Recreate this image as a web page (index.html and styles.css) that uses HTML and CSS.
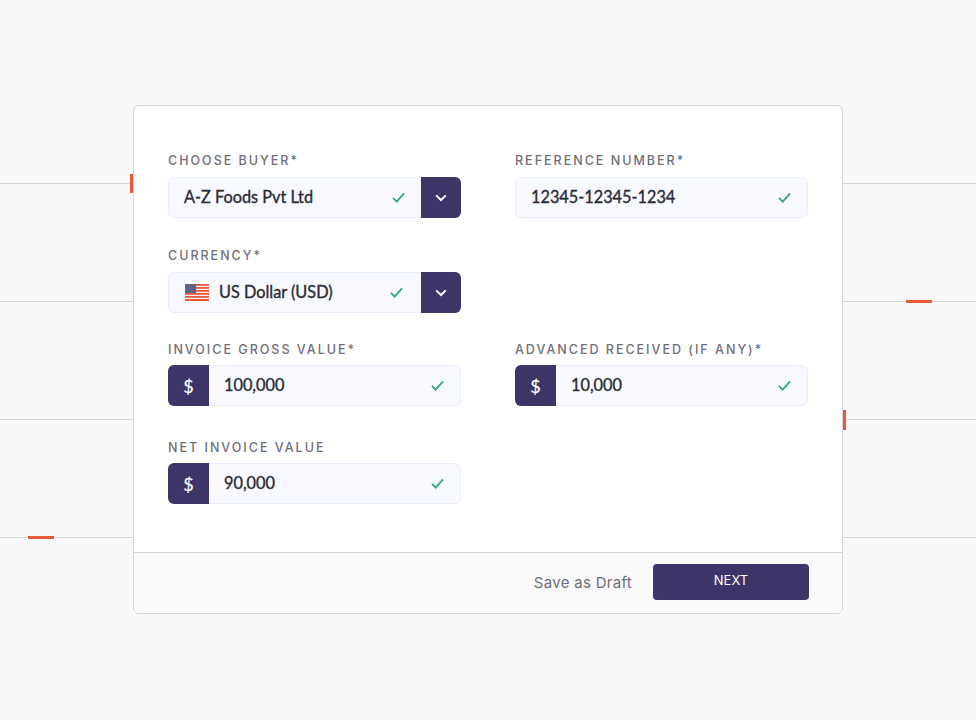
FILE: index.html
```html
<!DOCTYPE html>
<html lang="en">
<head>
    <meta charset="UTF-8">
    <meta name="viewport" content="width=device-width, initial-scale=1.0">
    <title>Invoice details</title>
    <link rel="stylesheet" href="styles.css">
</head>
<body>
<!-- background lines and ticks, behind the card -->
<div class="line line-1"></div>
<div class="line line-2"></div>
<div class="line line-3"></div>
<div class="line line-4"></div>
<div class="tick tick-1"></div>
<div class="tick tick-2"></div>
<div class="tick tick-3"></div>
<div class="tick tick-4"></div>

<div class="card">
    <div class="form">
        <div class="group">
            <div class="label">CHOOSE BUYER*</div>
            <div class="field">
                <div class="value">A-Z Foods Pvt Ltd</div>
                <svg class="check" viewBox="0 0 14 12"><path d="M1 6.5 5 10.5 13 1.5"/></svg>
                <div class="addon addon-right"><svg class="chevron" viewBox="0 0 12 8"><path d="M1.2 1.4 6 6 10.8 1.4"/></svg></div>
            </div>
        </div>
        <div class="group">
            <div class="label">REFERENCE NUMBER*</div>
            <div class="field">
                <div class="value">12345-12345-1234</div>
                <svg class="check" viewBox="0 0 14 12"><path d="M1 6.5 5 10.5 13 1.5"/></svg>
            </div>
        </div>
        <div class="group group-currency">
            <div class="label">CURRENCY*</div>
            <div class="field">
                <svg class="flag" viewBox="0 0 24 17">
                    <defs>
                        <pattern id="stars" width="2" height="2" patternUnits="userSpaceOnUse">
                            <rect x="0.5" y="0.5" width="0.9" height="0.9" fill="#c9c8dc"/>
                        </pattern>
                    </defs>
                    <rect width="24" height="17" fill="#f4f2f2"/>
                    <rect y="0" width="24" height="1.8" fill="#ea583b"/>
                    <rect y="3" width="24" height="1.8" fill="#ea583b"/>
                    <rect y="6" width="24" height="1.8" fill="#ea583b"/>
                    <rect y="9" width="24" height="1.8" fill="#ea583b"/>
                    <rect y="12" width="24" height="1.8" fill="#ea583b"/>
                    <rect y="15" width="24" height="2" fill="#ea583b"/>
                    <rect width="11" height="9" fill="#474577"/>
                    <rect width="11" height="9" fill="url(#stars)"/>
                </svg>
                <div class="value">US Dollar (USD)</div>
                <svg class="check" viewBox="0 0 14 12"><path d="M1 6.5 5 10.5 13 1.5"/></svg>
                <div class="addon addon-right"><svg class="chevron" viewBox="0 0 12 8"><path d="M1.2 1.4 6 6 10.8 1.4"/></svg></div>
            </div>
        </div>
        <div class="group"></div>
        <div class="group group-money">
            <div class="label">INVOICE GROSS VALUE*</div>
            <div class="field">
                <div class="addon addon-left">$</div>
                <div class="value">100,000</div>
                <svg class="check" viewBox="0 0 14 12"><path d="M1 6.5 5 10.5 13 1.5"/></svg>
            </div>
        </div>
        <div class="group group-money">
            <div class="label">ADVANCED RECEIVED (IF ANY)*</div>
            <div class="field">
                <div class="addon addon-left">$</div>
                <div class="value">10,000</div>
                <svg class="check" viewBox="0 0 14 12"><path d="M1 6.5 5 10.5 13 1.5"/></svg>
            </div>
        </div>
        <div class="group group-money">
            <div class="label">NET INVOICE VALUE</div>
            <div class="field">
                <div class="addon addon-left">$</div>
                <div class="value">90,000</div>
                <svg class="check" viewBox="0 0 14 12"><path d="M1 6.5 5 10.5 13 1.5"/></svg>
            </div>
        </div>
    </div>
    <div class="footer">
        <a class="draft">Save as Draft</a>
        <button class="button">NEXT</button>
    </div>
</div>
</body>
</html>
```

FILE: styles.css
```css
body {
    margin: 0;
    height: 720px;
    padding: 105px 0 0 133px;
    box-sizing: border-box;
    overflow: hidden;
    position: relative;
    background-color: #f7f8f8;
    font-family: "Lato", sans-serif;
}

.line {
    position: absolute;
    left: 0;
    right: 0;
    height: 1px;
    background-color: #d6d7d7;
}

.line-1 { top: 183px; }
.line-2 { top: 301px; }
.line-3 { top: 419px; }
.line-4 { top: 537px; }

.tick {
    position: absolute;
    background-color: #ea583b;
}

.tick-1 { left: 130px; top: 174px; width: 3px; height: 19px; }
.tick-2 { left: 906px; top: 300px; width: 26px; height: 3px; }
.tick-3 { left: 843px; top: 410px; width: 3px; height: 20px; }
.tick-4 { left: 28px; top: 536px; width: 26px; height: 3px; }

.card {
    position: relative;
    width: 710px;
    height: 509px;
    box-sizing: border-box;
    background-color: #fff;
    border: 1px solid #d4d5d5;
    border-radius: 6px;
    overflow: hidden;
}

.form {
    display: grid;
    grid-template-columns: 293px 293px;
    grid-template-rows: 95px 93px 98px 114px;
    column-gap: 54px;
    padding: 46px 0 0 34px;
}

.label {
    height: 17px;
    margin-bottom: 8px;
    font-family: "Inter", sans-serif;
    font-size: 12.5px;
    font-weight: 500;
    line-height: 17px;
    letter-spacing: 2px;
    color: #6f6e77;
}

.group-money .label {
    margin-top: 1px;
    margin-bottom: 7px;
}

.field {
    display: flex;
    align-items: center;
    height: 41px;
    box-sizing: border-box;
    background-color: #f8f9ff;
    border: 1px solid #e9ecfc;
    border-radius: 6px;
    padding-right: 16px;
}

/* Lato has no medium weight here, so thicken the regular a little */
.value {
    flex: 1;
    padding-left: 15px;
    padding-bottom: 2px;
    font-size: 16.3px;
    -webkit-text-stroke: 0.35px #2b2b33;
    color: #2b2b33;
}

.flag {
    width: 24px;
    height: 17px;
    margin-left: 16px;
    margin-right: -5px;
}

.check {
    width: 13px;
    height: 11px;
    fill: none;
    stroke: #2fa877;
    stroke-width: 1.9;
}

.addon {
    display: flex;
    align-items: center;
    justify-content: center;
    align-self: stretch;
    margin: -1px 0;
    flex-shrink: 0;
    background-color: #3d3468;
    color: #fff;
}

.addon-left {
    width: 41px;
    margin-left: -1px;
    border-radius: 6px 0 0 6px;
    font-size: 18px;
    -webkit-text-stroke: 0.2px #fff;
}

.addon-right {
    width: 40px;
    margin-left: 16px;
    margin-right: -17px;
    border-radius: 0 6px 6px 0;
}

.group-currency .addon-right {
    margin-left: 18px;
}

.chevron {
    width: 12px;
    height: 8px;
    fill: none;
    stroke: #fff;
    stroke-width: 2;
}

.footer {
    display: flex;
    justify-content: flex-end;
    align-items: center;
    gap: 21px;
    height: 61px;
    box-sizing: border-box;
    padding-right: 33px;
    background-color: #f9f9f9;
    border-top: 1px solid #d4d5d5;
    font-family: "Inter", sans-serif;
}

.draft {
    padding-bottom: 2px;
    font-size: 15px;
    letter-spacing: 0.3px;
    color: #6f6e77;
}

.button {
    width: 156px;
    height: 36px;
    margin-bottom: 2px;
    padding: 0 0 5px;
    background-color: #3d3468;
    border: none;
    border-radius: 4px;
    color: #fff;
    font-family: "Inter", sans-serif;
    font-size: 13px;
    font-weight: 400;
    cursor: pointer;
}
```
